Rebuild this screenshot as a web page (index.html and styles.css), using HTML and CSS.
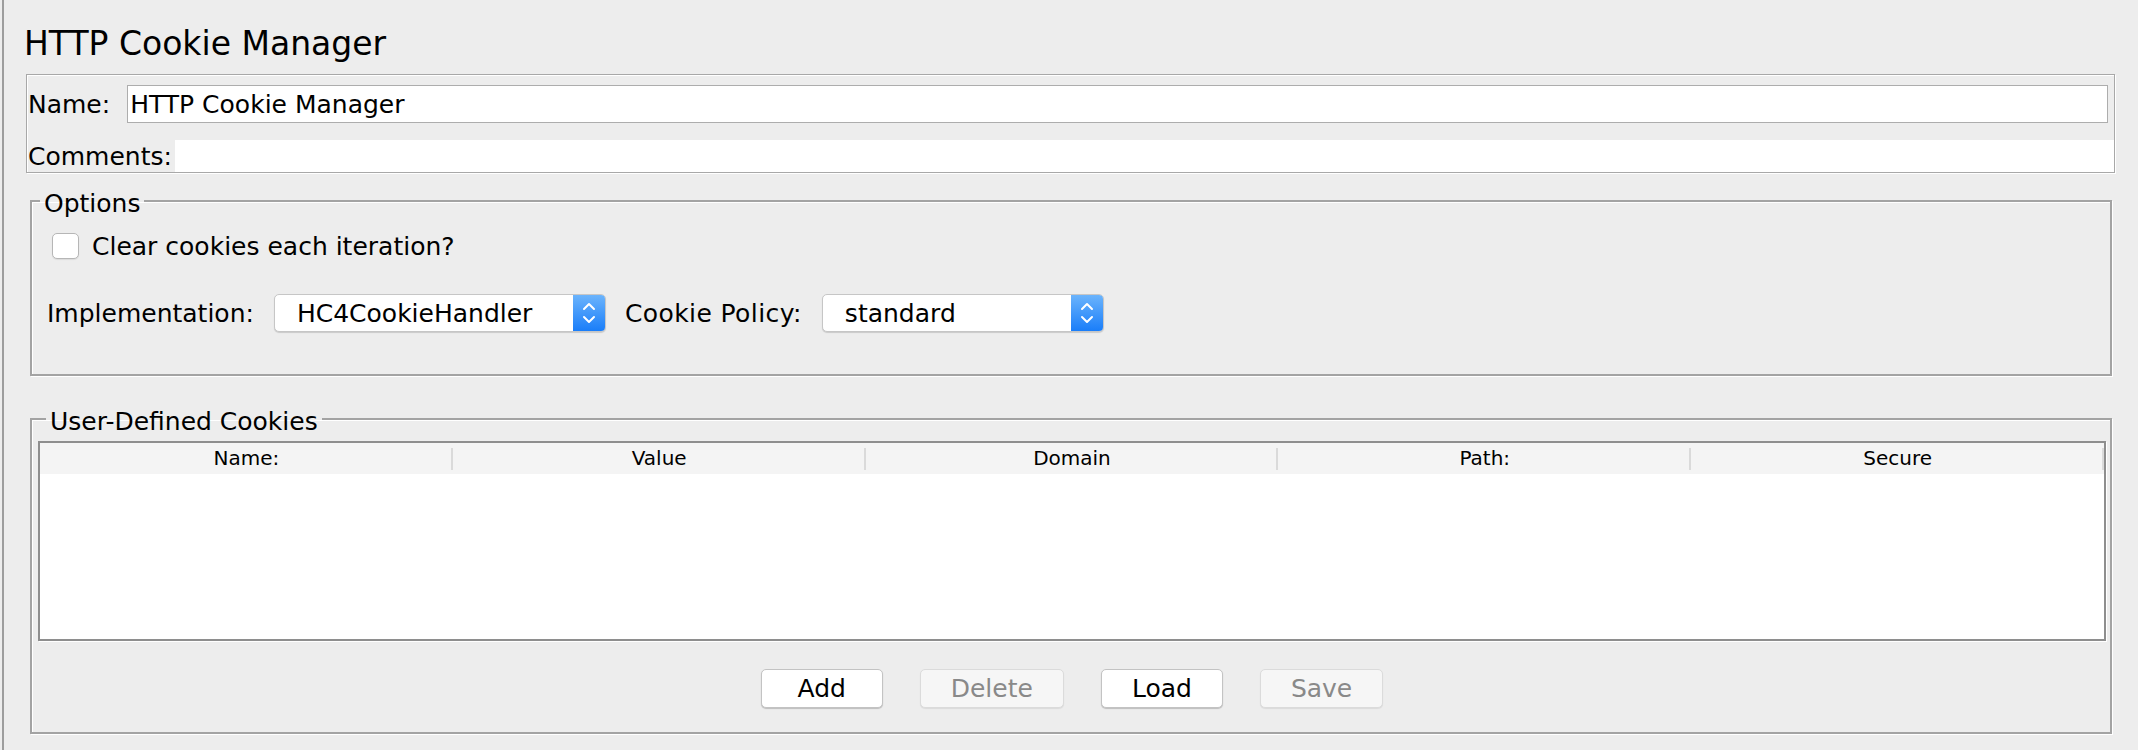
FILE: index.html
```html
<!DOCTYPE html>
<html lang="en">
<head>
<meta charset="utf-8">
<title>HTTP Cookie Manager</title>
<link rel="stylesheet" href="styles.css">
</head>
<body>
<div class="page">
  <h1 class="title">HTTP Cookie Manager</h1>

  <div class="name-panel">
    <div class="name-row">
      <label class="lbl name-lbl" for="name">Name:</label>
      <input class="text-field" id="name" type="text" value="HTTP Cookie Manager">
    </div>
    <div class="comments-row">
      <label class="lbl comments-lbl">Comments:</label>
      <div class="comments-area"></div>
    </div>
  </div>

  <fieldset class="group options">
    <legend>Options</legend>
    <div class="check-row">
      <input class="checkbox" type="checkbox" id="clear">
      <label for="clear">Clear cookies each iteration?</label>
    </div>
    <div class="combo-row">
      <span class="lbl">Implementation:</span>
      <div class="combo combo-impl">
        <span class="combo-text">HC4CookieHandler</span>
        <span class="combo-arrow">
          <svg width="32" height="36" viewBox="0 0 32 36"><path d="M11 14 L16 9 L21 14 M11 22 L16 27 L21 22" fill="none" stroke="#fff" stroke-width="2" stroke-linecap="round" stroke-linejoin="round"/></svg>
        </span>
      </div>
      <span class="lbl policy-lbl">Cookie Policy:</span>
      <div class="combo combo-policy">
        <span class="combo-text">standard</span>
        <span class="combo-arrow">
          <svg width="32" height="36" viewBox="0 0 32 36"><path d="M11 14 L16 9 L21 14 M11 22 L16 27 L21 22" fill="none" stroke="#fff" stroke-width="2" stroke-linecap="round" stroke-linejoin="round"/></svg>
        </span>
      </div>
    </div>
  </fieldset>

  <fieldset class="group cookies">
    <legend>User-Defined Cookies</legend>
    <div class="table">
      <div class="thead">
        <div class="th">Name:</div>
        <div class="th">Value</div>
        <div class="th">Domain</div>
        <div class="th">Path:</div>
        <div class="th">Secure</div>
      </div>
      <div class="tbody"></div>
    </div>
    <div class="buttons">
      <button class="btn" type="button">Add</button>
      <button class="btn" type="button" disabled>Delete</button>
      <button class="btn" type="button">Load</button>
      <button class="btn" type="button" disabled>Save</button>
    </div>
  </fieldset>
</div>
</body>
</html>
```

FILE: styles.css
```css
* { box-sizing: border-box; }

html, body {
  margin: 0;
  height: 100%;
}

body {
  background: #ededed;
  font-family: "DejaVu Sans", "Liberation Sans", sans-serif;
  font-size: 25px;
  color: #000;
  overflow: hidden;
}

.page {
  margin-left: 2px;
  border-left: 2px solid #9d9d9d;
  height: 750px;
  padding-top: 25px;
}

.title {
  margin: 0 0 0 20px;
  font-size: 33px;
  font-weight: normal;
  line-height: 38px;
}

/* Name / Comments panel */
.name-panel {
  margin: 11px 23px 0 22px;
  border: 1px solid #a8a8a8;
  box-shadow: inset 1px 1px 0 #fff, 1px 1px 0 #fff;
  padding: 10px 0 0 1px;
}

.name-row {
  display: flex;
  align-items: center;
  padding-right: 6px;
}

.lbl { white-space: nowrap; }

.name-lbl { margin-right: 17px; }

.text-field {
  flex: 1;
  height: 38px;
  border: 1px solid #adadad;
  background: #fff;
  padding: 0 2px;
  font: inherit;
  color: #000;
  outline: none;
}

.comments-row {
  display: flex;
  align-items: center;
  margin-top: 17px;
  height: 32px;
}

.comments-lbl { margin-right: 3px; }

.comments-area {
  flex: 1;
  align-self: stretch;
  background: #fff;
}

/* Titled groups */
.group {
  margin: 11px 26px 0 26px;
  border: 2px solid #a3a3a3;
  box-shadow: inset 1px 1px 0 #fff, 1px 1px 0 #fff;
  padding: 15px 0 42px 0;
  min-width: 0;
}

.group legend {
  margin-left: 8px;
  padding: 6px 4px 0;
  line-height: 28px;
  font-size: 25px;
}

.check-row {
  display: flex;
  align-items: center;
  height: 26px;
}

.checkbox {
  appearance: none;
  -webkit-appearance: none;
  width: 27px;
  height: 26px;
  margin: 0 13px 0 20px;
  border: 1px solid #b6b6b6;
  border-radius: 5px;
  background: #fff;
  box-shadow: 0 1px 1px rgba(0, 0, 0, 0.08);
}

.combo-row {
  display: flex;
  align-items: center;
  margin-top: 35px;
  padding-left: 15px;
}

.combo {
  display: flex;
  height: 38px;
  border: 1px solid #c6c6c6;
  border-radius: 5px;
  background: #fff;
  box-shadow: 0 1px 1px rgba(0, 0, 0, 0.15);
  overflow: hidden;
}

.combo-impl { width: 332px; margin-left: 20px; }
.combo-policy { width: 282px; margin-left: 20px; }
.policy-lbl { margin-left: 19px; letter-spacing: 0.4px; }

.combo-text {
  flex: 1;
  display: flex;
  align-items: center;
  padding-left: 22px;
}

.combo-arrow {
  width: 32px;
  display: flex;
  align-items: center;
  justify-content: center;
  background: linear-gradient(#6bb4fc, #1a7ef9);
}

/* Cookies table */
.cookies {
  margin-top: 26px;
  padding: 5px 4px 24px 6px;
}

.table {
  border: 2px solid #8e8e8e;
  box-shadow: 1px 1px 0 #fff;
  background: #fff;
}

.thead {
  display: flex;
  height: 31px;
  background: #f4f4f4;
}

.th {
  flex: 1;
  position: relative;
  text-align: center;
  font-size: 20px;
  line-height: 31px;
}

.th::after {
  content: "";
  position: absolute;
  right: 0;
  top: 5px;
  bottom: 4px;
  width: 2px;
  background: #dadada;
}

.tbody { height: 165px; }

.buttons {
  display: flex;
  justify-content: center;
  gap: 37px;
  margin-top: 28px;
}

.btn {
  min-width: 122px;
  height: 39px;
  padding: 0 30px;
  border: 1px solid #c3c3c3;
  border-radius: 5px;
  background: #fff;
  box-shadow: 0 1px 1px rgba(0, 0, 0, 0.2);
  font: inherit;
  color: #000;
}

.btn:disabled {
  background: #f6f6f6;
  border-color: #dbdbdb;
  color: #898989;
  box-shadow: 0 1px 1px rgba(0, 0, 0, 0.08);
}
```
